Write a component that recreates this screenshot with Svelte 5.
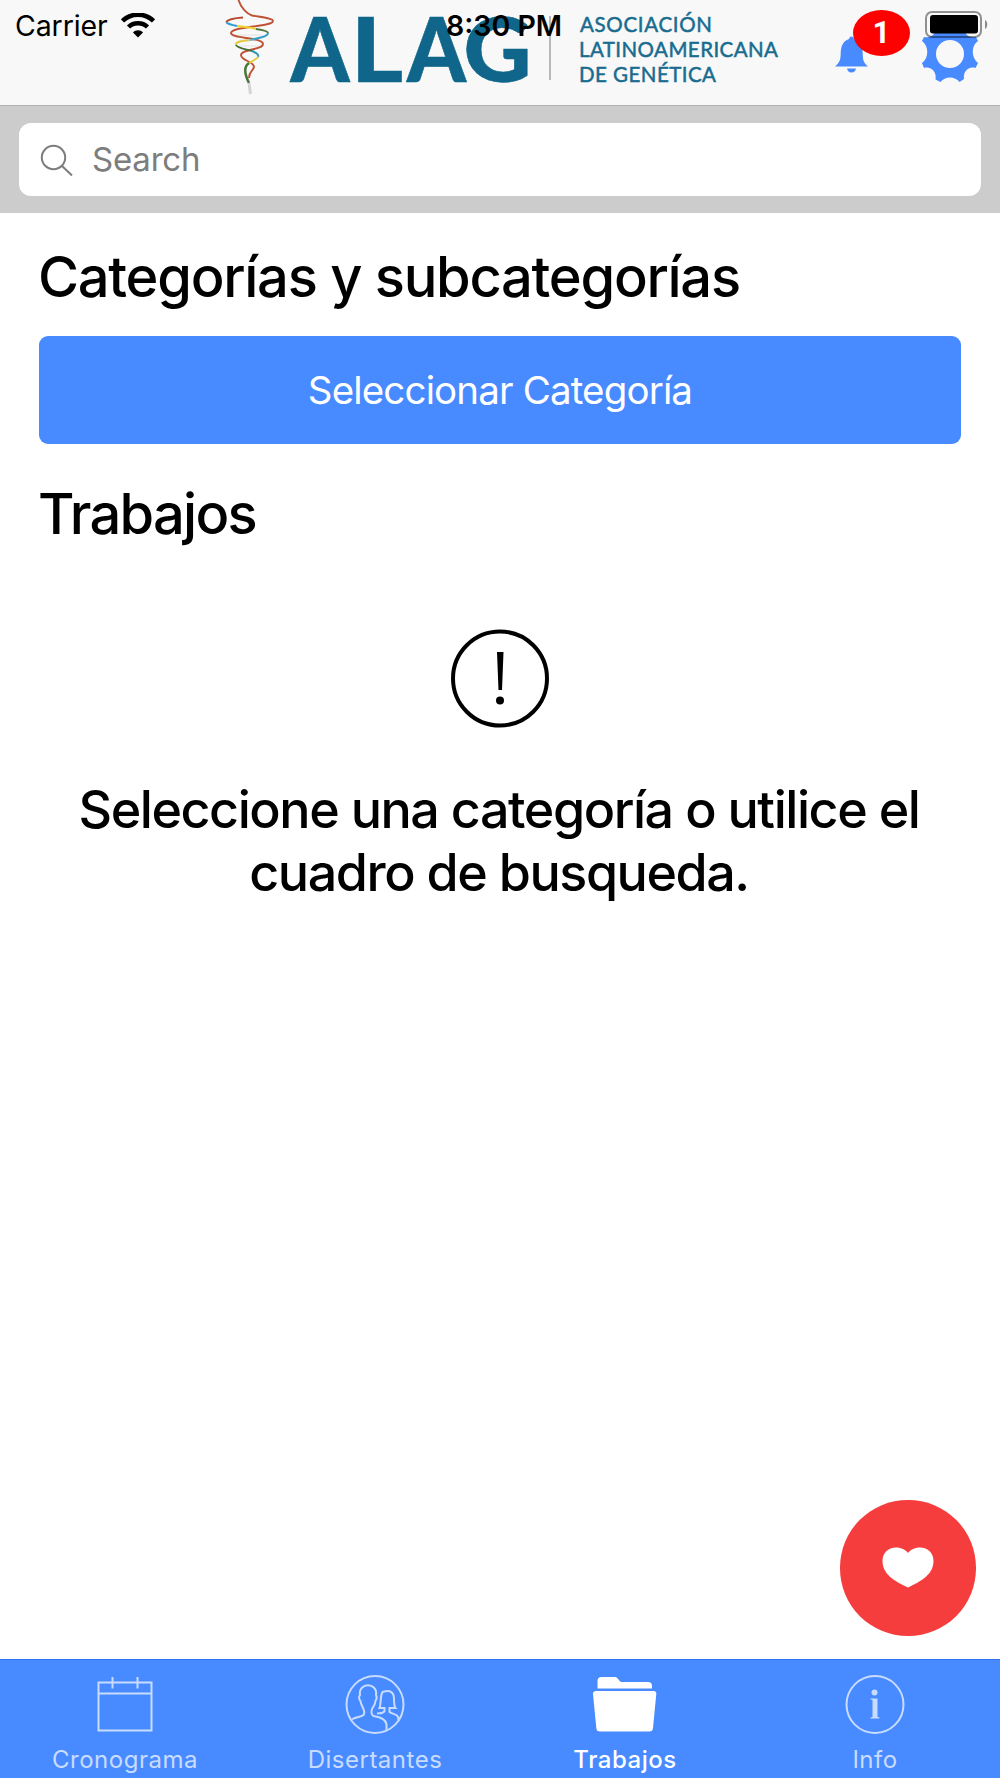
<script>
  let search = "";
  let selected = "Trabajos";

  const tabs = ["Cronograma", "Disertantes", "Trabajos", "Info"];
</script>

<div class="app">
  <header class="toolbar">
    <svg class="logo" width="570" height="105" viewBox="215 0 570 105">
      <g class="helix">
        <path d="M238.500 0C241 8 247 14 252 15.500C260 17 273 18 273 21C273 27 231 26 231 33C231 39 263 37 263 44C263 50 241 49 241 55C241 61 254 61 254 67C253 71 249 71 249 78" stroke="#bf5134" />
        <path d="M243 17.500C234 18 226 20 226.500 22.500" stroke="#b94a31" />
        <path d="M226.500 22.500C228 24 232 25 237 26" stroke="#2f9ed0" />
        <path d="M237 26C243 27 250 27 256 29" stroke="#f0d02d" />
        <path d="M256 29C263 30 268 31 268 33" stroke="#4c7639" />
        <path d="M268 33C268 37 258 38 250 40" stroke="#36a0c5" />
        <path d="M250 40C241 41 235 42 236 45" stroke="#e5c72d" />
        <path d="M236 45C237 48 245 49 252 51" stroke="#426c31" />
        <path d="M252 51C257 53 259 55 258 57" stroke="#3398b4" />
        <path d="M258 57C256 60 251 61 248 64" stroke="#e7ca32" />
        <path class="thick" d="M249 63C243 67 245 75 249 83" stroke="#47783b" />
        <path class="tip" d="M249 83L250.500 94" stroke="#d4d4d4" />
        <path class="faint" d="M238 35H262M240 46H259M240 40H254" stroke="#ccc" />
      </g>
      <g class="acronym">
        <text x="290.500" y="81.500" textLength="59" lengthAdjust="spacingAndGlyphs">A</text>
        <text x="351" y="81.500" textLength="52" lengthAdjust="spacingAndGlyphs">L</text>
        <text x="407" y="81.500" textLength="59" lengthAdjust="spacingAndGlyphs">A</text>
        <text x="463.500" y="81.500" textLength="68" lengthAdjust="spacingAndGlyphs">G</text>
      </g>
      <path d="M550 16V80" stroke="#a3a5ac" stroke-width="1.500" />
      <g class="name">
        <text x="580" y="32" textLength="132">ASOCIACIÓN</text>
        <text x="579" y="57" textLength="199">LATINOAMERICANA</text>
        <text x="579" y="81.500" textLength="137">DE GENÉTICA</text>
      </g>
    </svg>

    <svg class="actions" width="170" height="105" viewBox="830 0 170 105">
      <path d="M851.500 36.500C853 36.500 853.500 37.500 854 39C860 41 862.500 46 862.700 53C863 60 863 62 868 66.500H835C840 62 840.500 60 840.700 53C841 46 843 41 849 39C849.500 37.500 850 36.500 851.500 36.500Z" />
      <path d="M847 68.500H856C855.500 71 854 72.500 851.500 72.500C849 72.500 847.500 71 847 68.500Z" />
      <path fill-rule="evenodd" d="M936 26H964C963 32 968 39 976 37L978 41C971 45 971 58 978 63L975.500 68C968 66 963 72 964 79L959.500 82C955 76 945 76 940.500 82L935.500 79.500C937 72 931 66 924 68L922 63C929 58 929 46 922 41L924 37C932 39 937 32 936 26ZM950 40A14 14 0 1 0 950 68A14 14 0 1 0 950 40Z" />
    </svg>
    <span class="badge">1</span>

    <div class="status">
      <div class="carrier">
        <span>Carrier</span>
        <svg width="34" height="25" viewBox="0 0 34 25">
          <path d="M1.500 8C10-.5 24-.5 32.500 8M7.500 14C12.500 9 21.500 9 26.500 14" fill="none" stroke="#000" stroke-width="4.500" />
          <path d="M17 24.500L12 19.500C14.500 16.500 19.500 16.500 22 19.500Z" />
        </svg>
      </div>
      <span class="time">8:30 PM</span>
      <svg class="battery" width="64" height="28" viewBox="0 0 64 28">
        <rect x="1" y="1" width="55" height="25" rx="6" fill="none" stroke="#000" stroke-opacity=".42" stroke-width="2" />
        <rect x="5" y="4" width="48" height="18.500" rx="3" />
        <path d="M60 9C63 10.500 63 16.500 60 18Z" fill="#8a8a8a" />
      </svg>
    </div>
  </header>

  <div class="searchbar">
    <label class="search">
      <svg width="34" height="34" viewBox="0 0 34 34" fill="none" stroke="#7d7d7d" stroke-width="2">
        <circle cx="14.500" cy="14.500" r="11.700" />
        <path d="M22.500 22.500L33 32.500" />
      </svg>
      <input bind:value={search} placeholder="Search" />
    </label>
  </div>

  <main>
    <h1>Categorías y subcategorías</h1>
    <button class="select">Seleccionar Categoría</button>
    <h1 class="works">Trabajos</h1>

    <div class="empty">
      <svg width="98" height="99" viewBox="0 0 98 99">
        <circle cx="49" cy="49.500" r="47" fill="none" stroke="#000" stroke-width="4" />
        <path d="M46 23H52.500L51 61H47.500Z" />
        <circle cx="49" cy="71.500" r="4" />
      </svg>
      <p>Seleccione una categoría o utilice el<br />cuadro de busqueda.</p>
    </div>
  </main>

  <button class="fab" aria-label="Favoritos">
    <svg width="52" height="41" viewBox="0 0 52 41">
      <path d="M26 6C23 2 18 .5 14 .5C6 .5 .5 6 .5 14C.5 27 12 34 26 40.500C40 34 51.500 27 51.500 14C51.500 6 46 .5 38 .5C34 .5 29 2 26 6Z" fill="#fff" />
    </svg>
  </button>

  <nav>
    {#each tabs as tab}
      <button class="tab" class:active={selected === tab} on:click={() => (selected = tab)}>
        <svg width="66" height="62" viewBox="0 0 66 62" fill="none" stroke="currentColor" stroke-width="2">
          {#if tab === "Cronograma"}
            <path d="M6.500 8.500H59.500V56.500H6.500ZM6.500 19.500H59.500M20.500 3V14.500M45.500 3V14.500" />
          {:else if tab === "Disertantes"}
            <circle cx="33" cy="30.500" r="28.500" />
            <path d="M10 45.500C12 43 19 43.500 21.500 41C23 39 22 36 21 34C20 31 19 31 18.500 27C16.500 25 17 22 18 21C16 8 36 8 34 21C35 23 35 25 33.500 27C33 31 32 32 30.500 34C29 37 29 41 31.500 42C37 43 44.500 45 44.500 51V56" />
            <path d="M35 39.500C38 39 41 40 42.500 37V34H37.500C39.500 30 37.500 18 42 17.500C48 16 52 18 52 25C52 29 52 32 53.500 34H47.500V38C51 41 56.500 39 56.500 46" />
          {:else if tab === "Trabajos"}
            <g fill="currentColor" stroke="none">
              <path d="M5.500 14.500V7Q5.500 3 9.500 3H22.500C25.500 3 25.500 5 29 8H56Q60 8 60 12V14.500Z" />
              <path d="M4 17H61.500Q64.500 17 64.300 20L61 54Q60.700 57.500 57.500 57.500H8Q4.500 57.500 4.300 54L1 20Q1 17 4 17Z" />
            </g>
          {:else}
            <circle cx="33" cy="30.500" r="28.500" />
            <g fill="currentColor" stroke="none">
              <circle cx="32.500" cy="18.500" r="3" />
              <path d="M28.500 24.500H35.500V43L37.500 43.500V44.500H28.500V43.500L30.500 43V26L28.500 25.500Z" />
            </g>
          {/if}
        </svg>
        <span>{tab}</span>
      </button>
    {/each}
  </nav>
</div>

<style>
  :global(body) {
    margin: 0;
  }
  .app {
    position: relative;
    display: flex;
    flex-direction: column;
    height: 1778px;
    background: #fff;
    color: #000;
    font-family: Inter, "Liberation Sans", sans-serif;
  }
  svg {
    display: block;
    flex: none;
  }
  button {
    padding: 0;
    border: 0;
    font-family: inherit;
  }
  .toolbar {
    position: relative;
    box-sizing: border-box;
    display: flex;
    height: 106px;
    padding-left: 215px;
    background: #f8f8f8;
    border-bottom: 1px solid #b2b2b2;
  }
  .helix {
    fill: none;
    stroke-width: 1.9;
  }
  .helix .thick {
    stroke-width: 2.5;
  }
  .helix .tip {
    stroke-width: 3;
  }
  .helix .faint {
    stroke-width: 0.5;
  }
  .acronym {
    fill: #0f668a;
    stroke: #0f668a;
    stroke-width: 0.6;
    font: 900 89.5px Lato, sans-serif;
  }
  .name {
    fill: #196c8f;
    stroke: #196c8f;
    stroke-width: 0.5;
    font: 400 20.5px Lato, sans-serif;
  }
  .actions {
    margin-left: 45px;
    fill: #488aff;
  }
  .badge {
    position: absolute;
    top: 10px;
    left: 853px;
    width: 57px;
    height: 46px;
    border-radius: 50%;
    background: #f00;
    color: #fff;
    font: 700 31px/46px Roboto, sans-serif;
    text-align: center;
  }
  .status {
    position: absolute;
    top: 0;
    left: 0;
    display: grid;
    grid-template-columns: 1fr 112px 1fr;
    align-items: center;
    box-sizing: border-box;
    width: 1000px;
    height: 50px;
    padding: 0 11px 0 15px;
    font-size: 28.5px;
  }
  .carrier {
    display: flex;
    align-items: center;
    gap: 13px;
    letter-spacing: -0.1px;
  }
  .time {
    font-weight: 600;
    white-space: nowrap;
  }
  .battery {
    justify-self: end;
  }
  .searchbar {
    box-sizing: border-box;
    height: 107px;
    padding: 17px 19px;
    background: #ccc;
  }
  .search {
    display: flex;
    align-items: center;
    gap: 19px;
    box-sizing: border-box;
    height: 73px;
    padding-left: 20px;
    border-radius: 12px;
    background: #fff;
  }
  input {
    flex: 1;
    padding: 0 0 2px;
    border: 0;
    outline: 0;
    background: none;
    font: 33px Inter, sans-serif;
    letter-spacing: -0.2px;
  }
  input::placeholder {
    color: #7d7d7d;
  }
  main {
    flex: 1;
    padding: 31px 39px 0;
  }
  h1 {
    margin: 0;
    font-size: 56px;
    font-weight: 500;
    line-height: 66px;
    letter-spacing: -1.27px;
    text-indent: -1px;
    white-space: nowrap;
  }
  .works {
    letter-spacing: -1.7px;
  }
  .select {
    display: block;
    width: 100%;
    height: 108px;
    margin: 26px 0 37px;
    border-radius: 9px;
    background: #488aff;
    color: #fff;
    font-size: 38.5px;
    letter-spacing: -0.85px;
  }
  .empty {
    display: flex;
    flex-direction: column;
    align-items: center;
    padding-top: 82px;
  }
  p {
    margin: 50px 0 0;
    padding-right: 2px;
    font-size: 52px;
    font-weight: 500;
    line-height: 63px;
    letter-spacing: -1.44px;
    text-align: center;
    white-space: nowrap;
  }
  .fab {
    position: absolute;
    top: 1500px;
    left: 840px;
    display: flex;
    align-items: center;
    justify-content: center;
    width: 135.5px;
    height: 135.5px;
    border-radius: 50%;
    background: #f53d3d;
  }
  nav {
    box-sizing: border-box;
    display: grid;
    grid-template-columns: repeat(4, 1fr);
    height: 119px;
    border-top: 1px solid #2f73f0;
    background: #488aff;
  }
  .tab {
    display: flex;
    flex-direction: column;
    align-items: center;
    gap: 9px;
    padding-top: 14px;
    background: none;
    color: #c8dcff;
    font-size: 24px;
    line-height: 30px;
    letter-spacing: 0.5px;
  }
  .active {
    color: #fff;
    font-weight: 500;
  }
</style>
